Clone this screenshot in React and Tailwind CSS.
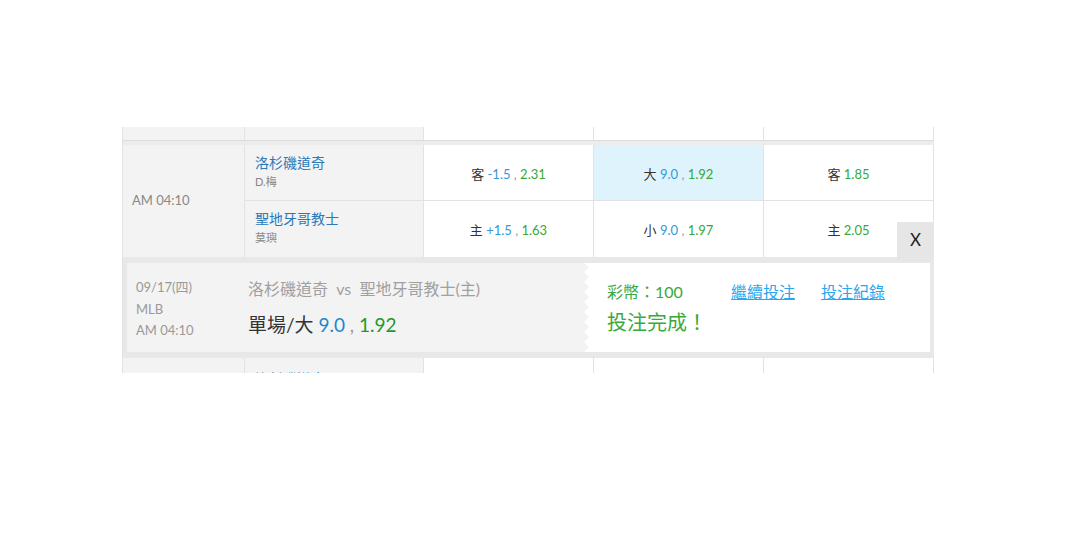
const font = { fontFamily: "Lato, 'Noto Sans CJK TC', sans-serif" };

const Odds = ({ label, line, price }) => (
  <span className="text-[13px] text-[#333]">
    {label}
    {line && <span className="text-[#3399dd]"> {line}</span>}
    {line && <span className="text-[#999]"> ,</span>}
    <span className="text-[#33aa33]"> {price}</span>
  </span>
);

const OddsCell = ({ children, active }) => (
  <div className={`w-[170px] border-r border-[#e2e2e2] flex items-center justify-center pt-[4px] ${active ? "bg-[#def3fc]" : "bg-white"}`}>
    {children}
  </div>
);

const TeamRow = ({ name, pitcher, cells, last }) => (
  <div className={`flex h-[56px] ${last ? "" : "border-b border-[#e2e2e2]"}`}>
    <div className="w-[179px] bg-[#f3f3f3] border-r border-[#e2e2e2] pl-[10px] pt-[8px]">
      <div className="text-[14px] text-[#2a7ab8] leading-[20px]">{name}</div>
      <div className="text-[11px] text-[#888] leading-[17px]">{pitcher}</div>
    </div>
    {cells}
  </div>
);

const Zigzag = () => (
  <svg width="9" height="89" viewBox="0 0 9 89" className="block shrink-0">
    <polygon
      fill="#f3f3f3"
      points="0,0 3,0 8,4 3,9 8,14 3,19 8,24 3,29 8,34 3,39 8,44 3,49 8,54 3,59 8,64 3,69 8,74 3,79 8,84 3,89 0,89"
    />
  </svg>
);

export default function App() {
  return (
    <div className="w-[1080px] h-[535px] bg-white pt-[127px] pl-[122px]" style={font}>
      <div className="relative w-[812px] h-[246px] overflow-hidden border-l border-[#e2e2e2]">
        {/* previous row, cut off */}
        <div className="flex h-[13px]">
          <div className="w-[122px] bg-[#f3f3f3] border-r border-[#e2e2e2]" />
          <div className="w-[179px] bg-[#f3f3f3] border-r border-[#e2e2e2]" />
          <div className="w-[170px] border-r border-[#e2e2e2]" />
          <div className="w-[170px] border-r border-[#e2e2e2]" />
          <div className="w-[170px] border-r border-[#e2e2e2]" />
        </div>
        <div className="h-[5px] bg-[#ececec] border-t border-[#dcdcdc]" />

        {/* game */}
        <div className="flex">
          <div className="w-[122px] bg-[#f3f3f3] border-r border-[#e2e2e2] flex items-center pl-[9px] text-[13px] text-[#888]">
            AM 04:10
          </div>
          <div className="flex flex-col">
            <TeamRow
              name="洛杉磯道奇"
              pitcher="D.梅"
              cells={
                <>
                  <OddsCell><Odds label="客" line="-1.5" price="2.31" /></OddsCell>
                  <OddsCell active><Odds label="大" line="9.0" price="1.92" /></OddsCell>
                  <OddsCell><Odds label="客" price="1.85" /></OddsCell>
                </>
              }
            />
            <TeamRow
              name="聖地牙哥教士"
              pitcher="莫璵"
              last
              cells={
                <>
                  <OddsCell><Odds label="主" line="+1.5" price="1.63" /></OddsCell>
                  <OddsCell><Odds label="小" line="9.0" price="1.97" /></OddsCell>
                  <OddsCell><Odds label="主" price="2.05" /></OddsCell>
                </>
              }
            />
          </div>
        </div>

        {/* bet confirmation */}
        <div className="bg-[#e8e8e8] pt-[6px] pb-[6px] pl-[5px] pr-[4px] -ml-px">
          <div className="flex h-[89px] bg-white">
            <div className="flex bg-[#f3f3f3] w-[454px]">
              <div className="w-[121px] pl-[9px] pt-[14px] text-[13px] text-[#999] leading-[21.5px]">
                <div>09/17(四)</div>
                <div>MLB</div>
                <div>AM 04:10</div>
              </div>
              <div className="pt-[15px]">
                <div className="text-[16px] text-[#a0a0a0] leading-[22px]">
                  洛杉磯道奇 &nbsp;vs&nbsp; 聖地牙哥教士(主)
                </div>
                <div className="mt-[13px] text-[19px] leading-[24px] text-[#333]">
                  單場/大 <span className="text-[#1b87d0]">9.0</span>
                  <span className="text-[#999]"> , </span>
                  <span className="text-[#1f9a1f]">1.92</span>
                </div>
              </div>
            </div>
            <Zigzag />
            <div className="pl-[17px] pt-[18px]">
              <div className="flex items-baseline text-[16px] leading-[22px]">
                <span className="text-[#3aa83a] w-[124px]">
                  彩幣：100
                </span>
                <a href="#" className="text-[#2aa6ee] underline w-[90px]">繼續投注</a>
                <a href="#" className="text-[#2aa6ee] underline">投注紀錄</a>
              </div>
              <div className="mt-[6px] text-[20px] leading-[26px] text-[#3aa83a]">投注完成！</div>
            </div>
          </div>
        </div>

        {/* next row, cut off */}
        <div className="flex h-[40px]">
          <div className="w-[122px] bg-[#f3f3f3] border-r border-[#e2e2e2]" />
          <div className="w-[179px] bg-[#f3f3f3] border-r border-[#e2e2e2] pl-[10px] pt-[11px]">
            <div className="text-[14px] text-[#2a7ab8] leading-[20px]">洛杉磯道奇</div>
          </div>
          <div className="w-[170px] border-r border-[#e2e2e2]" />
          <div className="w-[170px] border-r border-[#e2e2e2]" />
          <div className="w-[170px] border-r border-[#e2e2e2]" />
        </div>

        <button className="absolute right-0 top-[95px] w-[37px] h-[39px] bg-[#e6e6e6] text-[17px] text-[#222] flex items-center justify-center pb-[4px]">
          X
        </button>
      </div>
    </div>
  );
}
